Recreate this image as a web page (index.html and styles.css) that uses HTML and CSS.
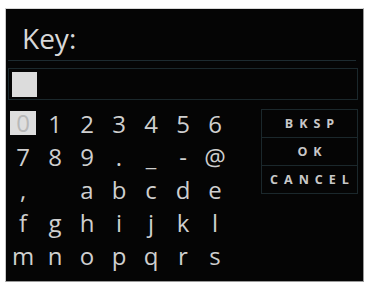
FILE: index.html
```html
<!DOCTYPE html>
<html>
<head>
<meta charset="utf-8">
<link rel="stylesheet" href="styles.css">
</head>
<body>
<div class="screen">
  <div class="title">Key:</div>
  <div class="rule"></div>
  <div class="input"><span class="cursor"></span></div>
  <div class="pad">
    <div class="keys">
      <span class="key sel">0</span><span class="key">1</span><span class="key">2</span><span class="key">3</span><span class="key">4</span><span class="key">5</span><span class="key">6</span>
      <span class="key">7</span><span class="key">8</span><span class="key">9</span><span class="key">.</span><span class="key">_</span><span class="key">-</span><span class="key">@</span>
      <span class="key">,</span><span class="key"> </span><span class="key">a</span><span class="key">b</span><span class="key">c</span><span class="key">d</span><span class="key">e</span>
      <span class="key">f</span><span class="key">g</span><span class="key">h</span><span class="key">i</span><span class="key">j</span><span class="key">k</span><span class="key">l</span>
      <span class="key">m</span><span class="key">n</span><span class="key">o</span><span class="key">p</span><span class="key">q</span><span class="key">r</span><span class="key">s</span>
    </div>
    <div class="buttons">
      <div class="btn">BKSP</div>
      <div class="btn">OK</div>
      <div class="btn">CANCEL</div>
    </div>
  </div>
</div>
</body>
</html>
```

FILE: styles.css
```css
html, body {
  margin: 0;
  padding: 0;
  background: #ffffff;
}
.screen {
  margin: 8px 0 0 5px;
  width: 357px;
  height: 272px;
  background: #050505;
  border: 1px solid #9a9a9a;
  border-top-color: #d8d8d8;
  border-left-color: #c8c8c8;
  font-family: "Open Sans", "DejaVu Sans", sans-serif;
  color: #d2d2d2;
  overflow: hidden;
}
.title {
  height: 51px;
  box-sizing: border-box;
  padding: 12px 0 0 16px;
  font-size: 28px;
  line-height: 35px;
  color: #d8d8d8;
}
.rule {
  margin-left: 2px;
  width: 348px;
  height: 1px;
  background: #1d2b30;
}
.input {
  margin: 7px 0 0 2px;
  width: 350px;
  height: 32px;
  box-sizing: border-box;
  border: 1px solid #1b282c;
  padding: 3px 0 0 3px;
}
.cursor {
  display: block;
  width: 25px;
  height: 25px;
  background: #dcdcdc;
}
.pad {
  display: flex;
  margin-top: 7px;
}
.keys {
  margin-left: 1px;
  display: grid;
  grid-template-columns: repeat(7, 32px);
  grid-auto-rows: 33px;
}
.key {
  display: flex;
  align-items: center;
  justify-content: center;
  font-size: 24px;
  line-height: 1;
  color: #cfcfcf;
}
.key.sel {
  width: 26px;
  height: 24px;
  margin: 4px 0 0 3px;
  justify-self: start;
  align-self: start;
  background: #dedede;
  color: #b8b8b8;
}
.buttons {
  margin: 2px 0 0 30px;
  display: flex;
  flex-direction: column;
}
.btn {
  width: 97px;
  height: 29px;
  box-sizing: border-box;
  border: 1px solid #1b282c;
  display: flex;
  align-items: center;
  justify-content: center;
  font-size: 12.5px;
  font-weight: bold;
  letter-spacing: 6px;
  padding-left: 6px;
  color: #c8c8c8;
}
.btn + .btn {
  margin-top: -1px;
}
```
